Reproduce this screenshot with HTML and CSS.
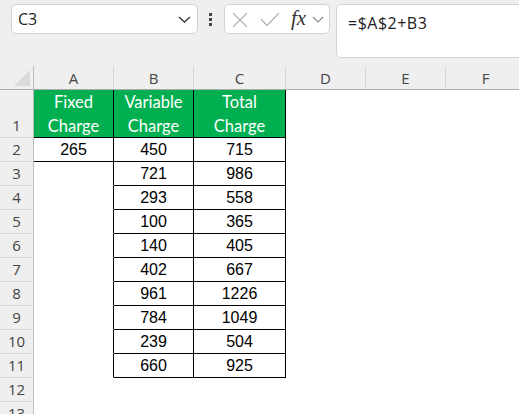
FILE: index.html
```html
<!DOCTYPE html>
<html>
<head>
<meta charset="utf-8">
<link rel="stylesheet" href="styles.css">
</head>
<body>
<div class="app">
  <div class="toolbar">
    <div class="namebox">
      <span class="ref">C3</span>
      <svg class="chev" width="13" height="7" viewBox="0 0 13 7"><path d="M1 1 L6.5 6 L12 1" fill="none" stroke="#333" stroke-width="1.3"/></svg>
    </div>
    <div class="dots"><i></i><i></i><i></i></div>
    <div class="fbox">
      <svg class="ic-x" width="16" height="16" viewBox="0 0 16 16"><path d="M1 1 L15 15 M15 1 L1 15" stroke="#b5b5b5" stroke-width="1.3" fill="none"/></svg>
      <svg class="ic-ok" width="20" height="15" viewBox="0 0 20 15"><path d="M1 7 L7 13.5 L19 1" stroke="#b5b5b5" stroke-width="1.3" fill="none"/></svg>
      <span class="fx">fx</span>
      <svg class="chev2" width="12" height="7" viewBox="0 0 12 7"><path d="M1 1 L6 6 L11 1" fill="none" stroke="#8a8a8a" stroke-width="1.1"/></svg>
    </div>
    <div class="formula">=$A$2+B3</div>
  </div>
  <div class="sheet">
    <div class="corner"><svg width="34" height="24" viewBox="0 0 34 24"><polygon points="30,4 30,20 14,20" fill="#dadada"/></svg></div>
    <div class="ch">A</div><div class="ch">B</div><div class="ch">C</div><div class="ch">D</div><div class="ch">E</div><div class="ch">F</div>

    <div class="rh">1</div>
    <div class="g">Fixed<br>Charge</div><div class="g">Variable<br>Charge</div><div class="g">Total<br>Charge</div>
    <div class="c"></div><div class="c"></div><div class="c"></div>

    <div class="rh">2</div>
    <div class="bx">265</div><div class="bx">450</div><div class="bx">715</div>
    <div class="c"></div><div class="c"></div><div class="c"></div>

    <div class="rh">3</div><div class="br"></div><div class="bx">721</div><div class="bx">986</div><div class="c"></div><div class="c"></div><div class="c"></div>
    <div class="rh">4</div><div class="br"></div><div class="bx">293</div><div class="bx">558</div><div class="c"></div><div class="c"></div><div class="c"></div>
    <div class="rh">5</div><div class="br"></div><div class="bx">100</div><div class="bx">365</div><div class="c"></div><div class="c"></div><div class="c"></div>
    <div class="rh">6</div><div class="br"></div><div class="bx">140</div><div class="bx">405</div><div class="c"></div><div class="c"></div><div class="c"></div>
    <div class="rh">7</div><div class="br"></div><div class="bx">402</div><div class="bx">667</div><div class="c"></div><div class="c"></div><div class="c"></div>
    <div class="rh">8</div><div class="br"></div><div class="bx">961</div><div class="bx">1226</div><div class="c"></div><div class="c"></div><div class="c"></div>
    <div class="rh">9</div><div class="br"></div><div class="bx">784</div><div class="bx">1049</div><div class="c"></div><div class="c"></div><div class="c"></div>
    <div class="rh">10</div><div class="br"></div><div class="bx">239</div><div class="bx">504</div><div class="c"></div><div class="c"></div><div class="c"></div>
    <div class="rh">11</div><div class="br"></div><div class="bx">660</div><div class="bx">925</div><div class="c"></div><div class="c"></div><div class="c"></div>
    <div class="rh">12</div><div class="c"></div><div class="c"></div><div class="c"></div><div class="c"></div><div class="c"></div><div class="c"></div>
    <div class="rh">13</div><div class="c"></div><div class="c"></div><div class="c"></div><div class="c"></div><div class="c"></div><div class="c"></div>
  </div>
</div>
</body>
</html>
```
FILE: styles.css
```css
* { box-sizing: border-box; }
html, body { margin: 0; padding: 0; }
body {
  width: 519px;
  height: 414px;
  overflow: hidden;
  background: #efefef;
  font-family: "Open Sans", "Noto Sans", sans-serif;
}
.app { width: 519px; height: 414px; overflow: hidden; }

.toolbar {
  height: 66px;
  display: flex;
  align-items: flex-start;
  padding-top: 4px;
  padding-left: 11px;
}
.toolbar > * { flex-shrink: 0; }
.namebox {
  width: 187px;
  height: 30px;
  background: #fff;
  border: 1px solid #d2d2d2;
  border-radius: 5px;
  display: flex;
  align-items: center;
  padding-left: 6px;
  padding-right: 6px;
}
.ref { font-size: 16px; color: #222; flex: 1; line-height: 1; }
.chev { display: block; }

.dots {
  width: 4px;
  margin-left: 11px;
  margin-top: 9px;
  display: flex;
  flex-direction: column;
  gap: 2px;
}
.dots i { display: block; width: 3px; height: 3px; background: #444; }

.fbox {
  margin-left: 11px;
  width: 106px;
  height: 30px;
  background: #fff;
  border: 1px solid #d2d2d2;
  border-radius: 5px;
  display: flex;
  align-items: center;
  padding-left: 7px;
}
.ic-x { display: block; margin-top: 1px; }
.ic-ok { display: block; margin-left: 12px; }
.fx {
  font-family: "Liberation Serif", serif;
  font-style: italic;
  font-size: 21px;
  color: #333;
  margin-left: 11px;
  line-height: 1;
  margin-top: -2px;
}
.chev2 { display: block; margin-left: 6px; }

.formula {
  margin-left: 6px;
  width: 200px;
  height: 54px;
  background: #fff;
  border: 1px solid #d2d2d2;
  border-radius: 5px;
  padding: 8px 0 0 11px;
  font-size: 16px;
  letter-spacing: 0.5px;
  color: #222;
  line-height: 20px;
}

.sheet {
  display: grid;
  grid-template-columns: 34px 80px 80px 92px 80px 80px 80px;
  grid-template-rows: 24px 48px repeat(12, 24px);
  background: #fff;
}
.sheet > div {
  border-right: 1px solid transparent;
  border-bottom: 1px solid transparent;
}
.corner {
  background: #efefef;
  border-right-color: #bdbdbd !important;
  border-bottom-color: #ababab !important;
}
.corner svg { display: block; }
.ch {
  background: #efefef;
  border-right-color: #d6d6d6 !important;
  border-bottom-color: #ababab !important;
  font-size: 15px;
  color: #444;
  display: flex;
  align-items: center;
  justify-content: center;
  padding-top: 1px;
}
.rh {
  background: #efefef;
  border-right-color: #bdbdbd !important;
  border-bottom-color: #dadada !important;
  font-size: 15px;
  color: #444;
  display: flex;
  align-items: flex-end;
  justify-content: center;
  line-height: 23px;
}
.c { background: #fff; }
.g {
  background: #00b050;
  border-right-color: #000 !important;
  border-bottom-color: #000 !important;
  color: #fff;
  font-family: "Lato", "Liberation Sans", sans-serif;
  font-size: 16.5px;
  line-height: 24px;
  text-align: center;
}
.bx {
  border-right-color: #000 !important;
  border-bottom-color: #000 !important;
  font-family: "Liberation Sans", Arial, sans-serif;
  font-size: 16px;
  color: #000;
  text-align: center;
  line-height: 23px;
}
.br { border-right-color: #000 !important; }
```
